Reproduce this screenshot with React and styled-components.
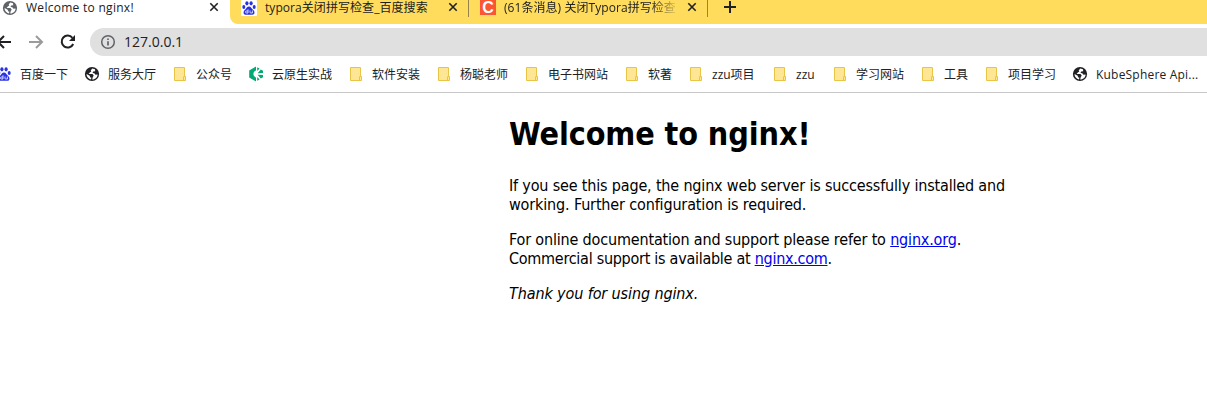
import React from "react";
import styled, { createGlobalStyle, css } from "styled-components";

const Global = createGlobalStyle`
  * { box-sizing: border-box; }
  body { margin: 0; background: #fff; overflow: hidden; }
`;
const uiFont = css`
  font-family: "Open Sans", "Noto Sans CJK SC", sans-serif;
  font-size: 12px;
  line-height: 18px;
  color: #202124;
  white-space: nowrap;
`;
const Browser = styled.div`
  width: 1207px;
  height: 403px;
  overflow: hidden;
  background: #fff;
`;
const TabStrip = styled.div`
  display: flex;
  height: 24px;
  background: #ffdc5c;
`;
const Tab = styled.div`
  display: flex;
  align-items: flex-start;
  flex: none;
  width: ${(p) => p.$width}px;
  height: 24px;
  padding-left: ${(p) => p.$pad}px;
  svg { flex: none; display: block; }
`;
const ActiveTab = styled(Tab)`
  background: #fff;
`;
const Inactive = styled.div`
  display: flex;
  flex: 1;
  background: #ffdc5c;
  border-bottom-left-radius: 8px;
`;
const StripBase = styled.div`
  display: flex;
  flex: 1;
  background: #fff;
`;
const TabTitle = styled.span`
  ${uiFont}
  flex: none;
  line-height: 16px;
  margin-left: 8px;
  width: ${(p) => p.$width}px;
  letter-spacing: ${(p) => p.$track || 0}px;
  ${(p) => p.$fade && css`mask-image: linear-gradient(to right, #000 146px, transparent 176px);`}
`;
const Divider = styled.div`
  flex: none;
  width: 1px;
  height: 17px;
  background: #95834a;
`;
const Toolbar = styled.div`
  display: flex;
  height: 35px;
  padding-top: 4px;
  svg { flex: none; display: block; }
`;
const NavButtons = styled.div`
  display: flex;
  gap: 12px;
  width: 90px;
  padding: 4px 0 0;
  margin-left: -6px;
  svg { width: 20px; height: 20px; }
`;
const Omnibox = styled.div`
  display: flex;
  flex: 1;
  height: 28px;
  margin-left: 6px;
  padding: 6px 0 0 10px;
  border-radius: 14px 0 0 14px;
  background: #e0e0e0;
`;
const Url = styled.span`
  ${uiFont}
  font-size: 14px;
  margin: -1px 0 0 8px;
`;
const Bookmarks = styled.div`
  display: flex;
  gap: 16px;
  height: 34px;
  margin-left: -4px;
  padding-top: 7px;
  border-bottom: 1px solid #c8c8c8;
`;
const Bookmark = styled.div`
  display: flex;
  flex: none;
  gap: 8px;
  svg { flex: none; display: block; }
`;
const BookmarkLabel = styled.span`
  ${uiFont}
  width: ${(p) => p.$width}px;
  letter-spacing: ${(p) => p.$track || 0}px;
`;
const Page = styled.main`
  width: 560px;
  margin: 0 auto 0 509px;
  padding-top: 22px;
  color: #000;
  font-family: "DejaVu Sans Condensed", "DejaVu Sans", sans-serif;
  font-stretch: condensed;
  font-size: 16px;
  line-height: 19px;
`;
const Heading = styled.h1`
  margin: 0 0 23px;
  font-size: 32px;
  line-height: 38px;
  font-weight: 700;
  letter-spacing: ${(p) => p.$track}px;
`;
const Paragraph = styled.p`
  margin: 0 0 16px;
`;
const Line = styled.span`
  display: block;
  white-space: nowrap;
  letter-spacing: ${(p) => p.$track}px;
`;
const Link = styled.a`
  color: #0000ee;
  text-decoration: underline;
`;

const Globe = ({ color = "#202124" }) => (
  <svg width="16" height="16" viewBox="0 0 16 16">
    <circle cx="8" cy="8" r="7.1" fill={color} />
    <path d="M8.2 2.6 6.7 4.5 7.3 5.6 5.8 6.6 4.6 7.9H8.5L9.7 9.5 8.7 11.3 8.2 13.5C11.5 13.2 13.6 11 13.6 8.4L11.5 8.8 10.3 7.2 8.5 6.9 9.2 5.4 11.2 5.2 11 3.2Z" fill="#fff" />
    <path d="M2.5 8.1 5.7 9.7 6.1 11.2 7.4 11.8 7 13.4C4.4 13 2.5 10.8 2.5 8.1Z" fill="#fff" />
  </svg>
);
const Paw = ({ box }) => (
  <svg width="16" height="16" viewBox="0 0 16 16">
    {box && <rect width="16" height="16" rx="1" fill="#fff" />}
    <g fill="#2932e1">
      <ellipse cx="2.8" cy="7" rx="1.5" ry="2" />
      <ellipse cx="5.9" cy="3.3" rx="1.6" ry="2.1" />
      <ellipse cx="10.1" cy="3.3" rx="1.6" ry="2.1" />
      <ellipse cx="13.2" cy="7.1" rx="1.5" ry="2" />
      <path d="M8 6.5C6 6.5 5.5 8.4 4 9.7 1.8 11.5 2.2 14.8 5 14.8H11.2C14 14.8 14.2 11.6 12 9.8 10.5 8.5 10 6.5 8 6.5Z" />
    </g>
    <path d="M7 9.3V13H5.5Q4.5 13 4.5 12T5.5 11H7M9 10.5V12.2Q9 13 9.8 13H11.4V10.5" fill="none" stroke="#fff" strokeWidth=".8" />
  </svg>
);
const Folder = () => (
  <svg width="16" height="16" viewBox="0 0 16 16">
    <path d="M2.5 1.5H12.5V14.5H2.5Z" fill="#ffe694" stroke="#e9c546" />
    <path d="M11.5 14.5V10.8Q11.5 10.4 12 10.4H13.5V14.5Z" fill="#ffe694" stroke="#e9c546" />
  </svg>
);
const Hexagon = () => (
  <svg width="16" height="16" viewBox="0 0 16 16" fill="#00aa72">
    <path d="M8 .5 1.2 4.4V11.6L8 15.5V11.4A3.5 3.5 0 0 1 8 4.6Z" />
    <path d="M9.2 1.2 11.6 2.6 9.2 5ZM9.2 11 11.6 13.4 9.2 14.8Z" />
    <path d="M12.8 3.4 15 4.7V7L9.6 7.2ZM9.6 8.8 15 9V11.3L12.8 12.6Z" />
  </svg>
);
const Close = () => (
  <svg width="16" height="16" viewBox="0 0 16 16">
    <path d="M4.3 3.3 11.7 10.7M11.7 3.3 4.3 10.7" stroke="#202124" strokeWidth="1.6" />
  </svg>
);
const Plus = () => (
  <svg width="14" height="16" viewBox="0 0 14 16">
    <path d="M7 1V13M1 7H13" stroke="#202124" strokeWidth="2" />
  </svg>
);
const CsdnMark = styled.span`
  display: flex;
  flex: none;
  justify-content: center;
  width: 16px;
  height: 15px;
  background: #fc5531;
  color: #fff;
  font: 700 16px/15px "Liberation Sans", sans-serif;
`;
const Arrow = ({ color, flip }) => (
  <svg viewBox="0 0 20 20">
    <path d={flip ? "M3 10H16M10 4 16 10 10 16" : "M17 10H4M10 4 4 10 10 16"} fill="none" stroke={color} strokeWidth="2" />
  </svg>
);
const Reload = () => (
  <svg viewBox="0 0 20 20">
    <path d="M15.2 12A6 6 0 1 1 14.4 5.8" fill="none" stroke="#202124" strokeWidth="2" />
    <path d="M17 3V9H11Z" fill="#202124" />
  </svg>
);
const Info = () => (
  <svg width="16" height="16" viewBox="0 0 16 16">
    <circle cx="8" cy="8" r="6.3" fill="none" stroke="#5f6368" strokeWidth="1.5" />
    <path d="M8 7.2V11.4M8 4.5V6" stroke="#5f6368" strokeWidth="1.7" />
  </svg>
);

const bookmarks = [
  [Paw, "百度一下", 48],
  [Globe, "服务大厅", 48],
  [Folder, "公众号", 36],
  [Hexagon, "云原生实战", 60],
  [Folder, "软件安装", 48],
  [Folder, "杨聪老师", 48],
  [Folder, "电子书网站", 60],
  [Folder, "软著", 24],
  [Folder, "zzu项目", 44],
  [Folder, "zzu", 20],
  [Folder, "学习网站", 48],
  [Folder, "工具", 24],
  [Folder, "项目学习", 48],
  [Globe, "KubeSphere Api...", 104, 0.2],
];

export default function App() {
  return (
    <Browser>
      <Global />
      <TabStrip>
        <ActiveTab $width={230} $pad={2}>
          <Globe color="#5f6368" />
          <TabTitle $width={180} $track={0.28}>Welcome to nginx!</TabTitle>
          <Close />
        </ActiveTab>
        <StripBase>
          <Inactive>
            <Tab $width={238} $pad={11}>
              <Paw box />
              <TabTitle $width={180} $track={0.06}>typora关闭拼写检查_百度搜索</TabTitle>
              <Close />
            </Tab>
            <Divider />
            <Tab $width={238} $pad={11}>
              <CsdnMark>C</CsdnMark>
              <TabTitle $width={180} $track={0.06} $fade>(61条消息) 关闭Typora拼写检查</TabTitle>
              <Close />
            </Tab>
            <Divider />
            <Tab $width={60} $pad={15}>
              <Plus />
            </Tab>
          </Inactive>
        </StripBase>
      </TabStrip>
      <Toolbar>
        <NavButtons>
          <Arrow color="#202124" />
          <Arrow color="#9b9b9b" flip />
          <Reload />
        </NavButtons>
        <Omnibox>
          <Info />
          <Url>127.0.0.1</Url>
        </Omnibox>
      </Toolbar>
      <Bookmarks>
        {bookmarks.map(([Icon, label, width, track]) => (
          <Bookmark key={label}>
            <Icon />
            <BookmarkLabel $width={width} $track={track}>{label}</BookmarkLabel>
          </Bookmark>
        ))}
      </Bookmarks>
      <Page>
        <Heading $track={-0.1}>Welcome to nginx!</Heading>
        <Paragraph>
          <Line $track={-0.17}>If you see this page, the nginx web server is successfully installed and</Line>
          <Line $track={-0.15}>working. Further configuration is required.</Line>
        </Paragraph>
        <Paragraph>
          <Line $track={-0.17}>For online documentation and support please refer to <Link>nginx.org</Link>.</Line>
          <Line $track={-0.27}>Commercial support is available at <Link>nginx.com</Link>.</Line>
        </Paragraph>
        <Paragraph>
          <Line as="em" $track={-0.11}>Thank you for using nginx.</Line>
        </Paragraph>
      </Page>
    </Browser>
  );
}
